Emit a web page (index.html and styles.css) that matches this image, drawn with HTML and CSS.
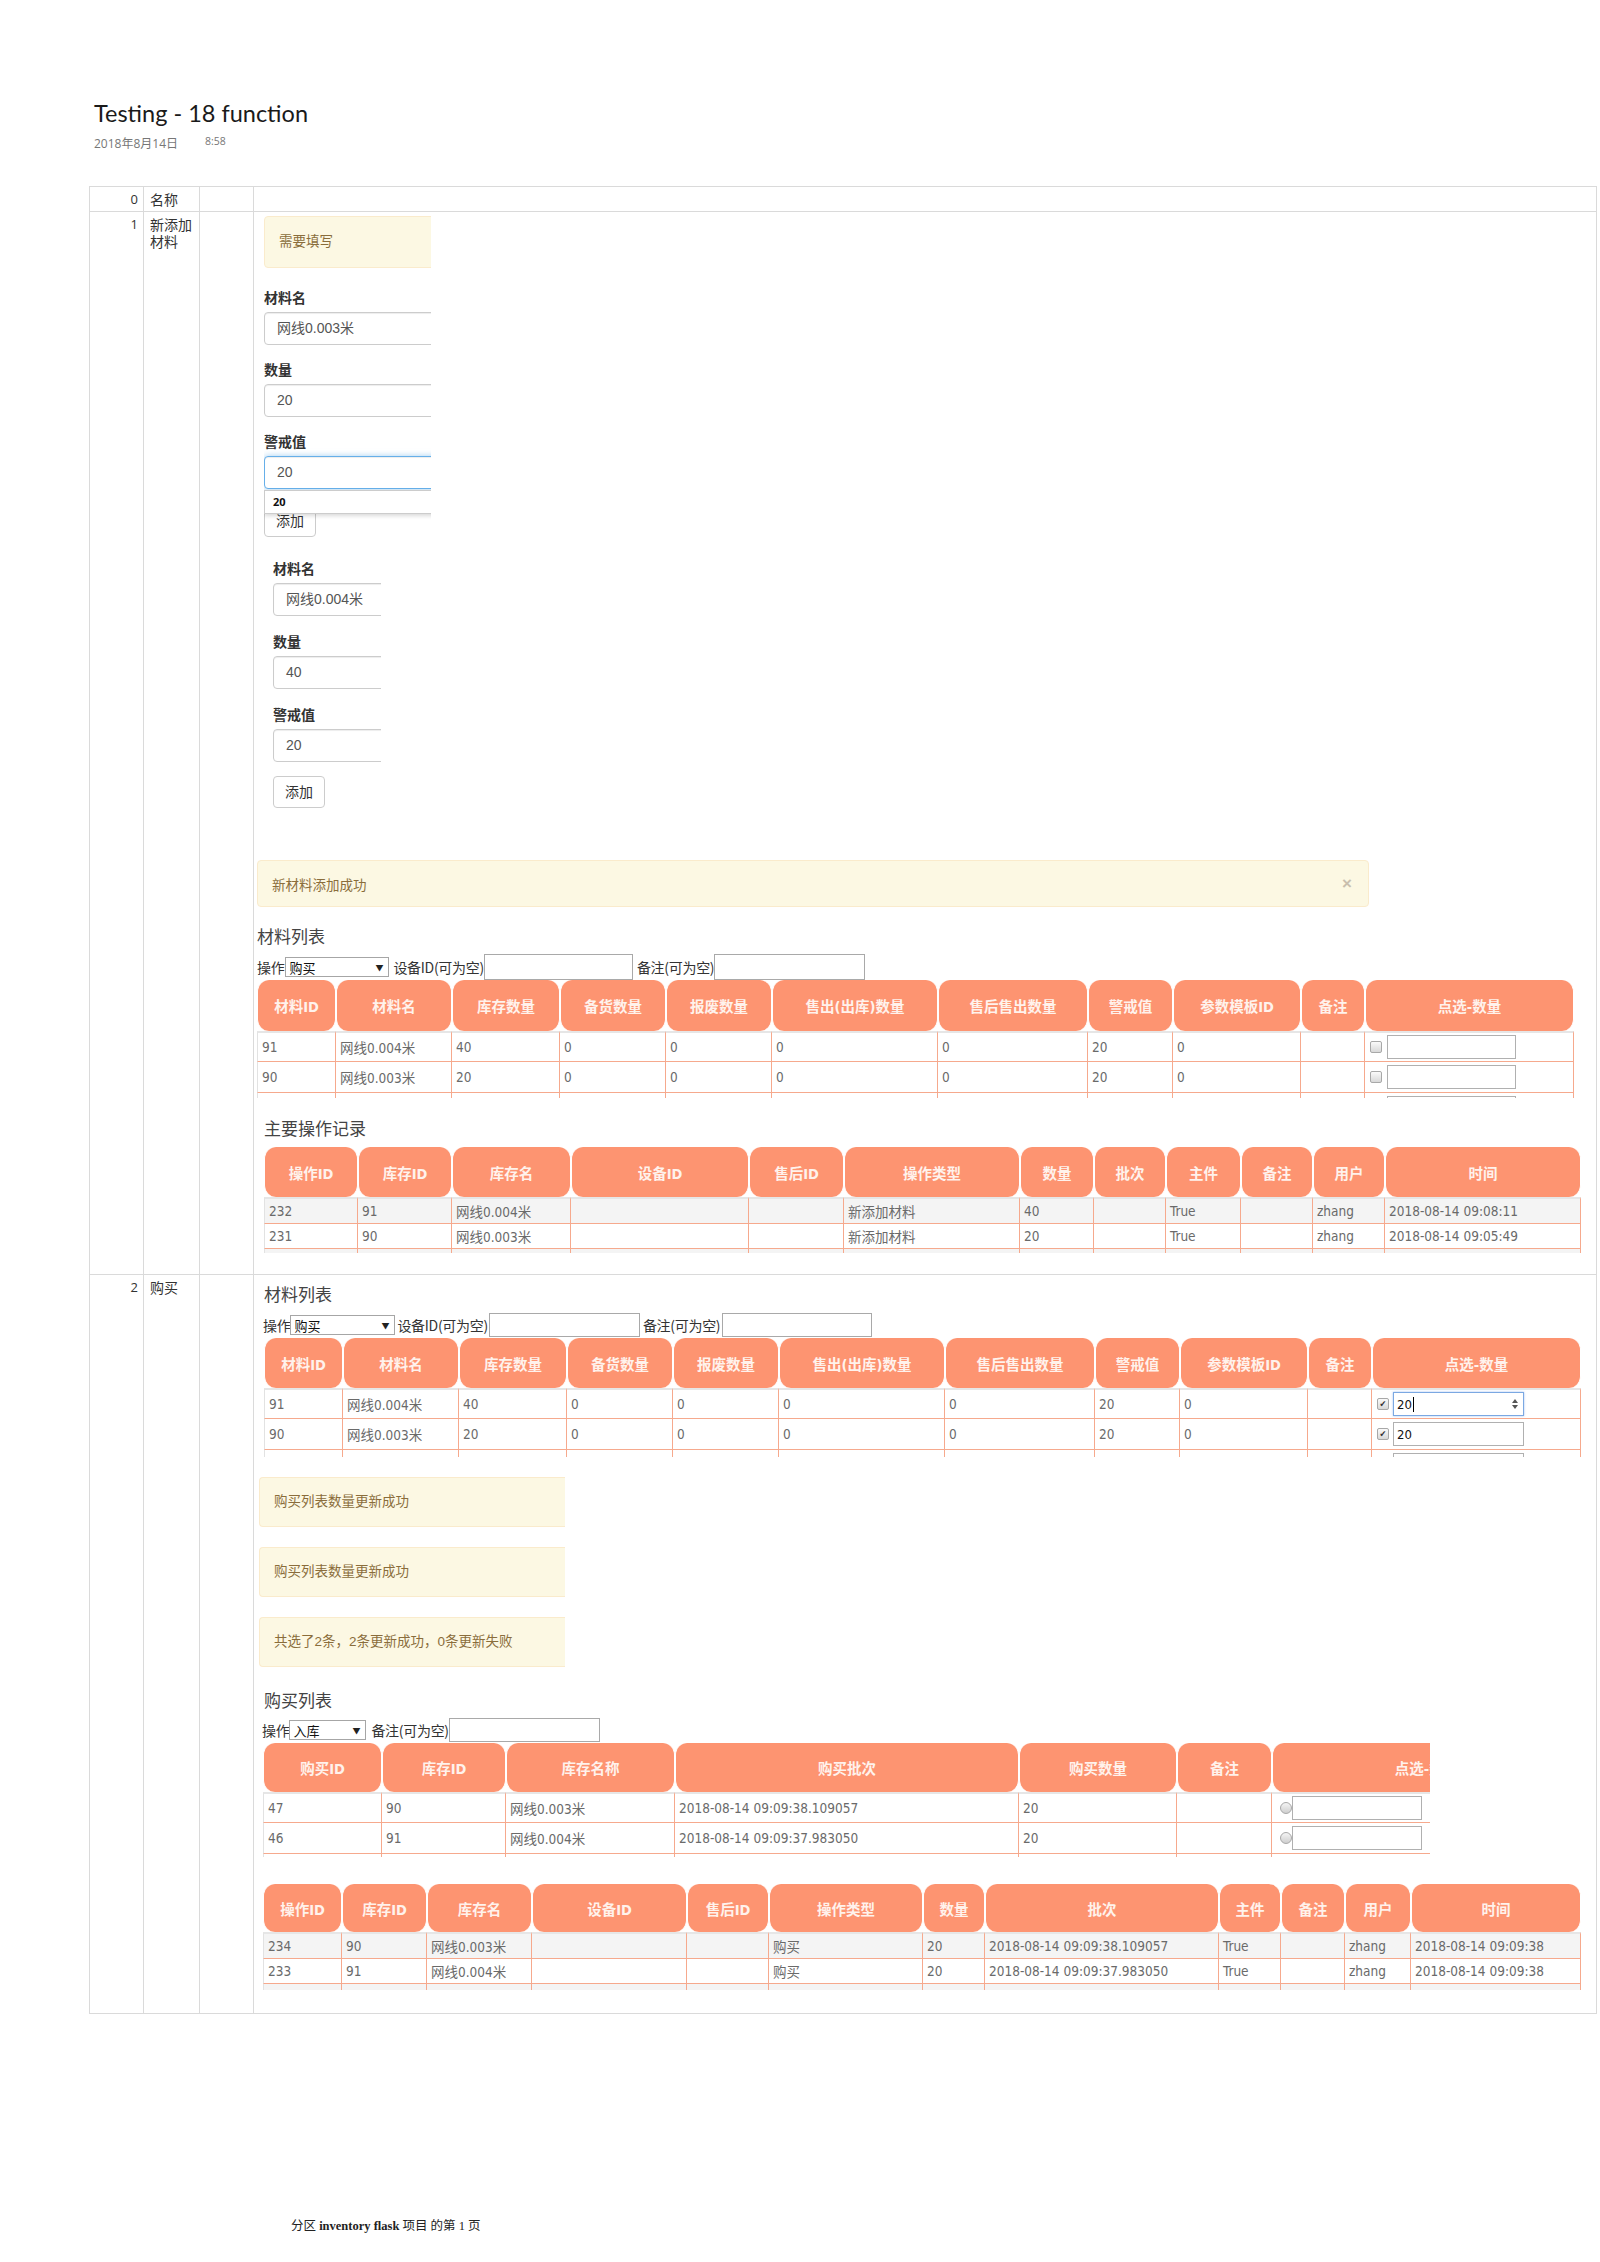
FILE: index.html
```html
<!DOCTYPE html>
<html lang="zh-CN">
<head>
<meta charset="utf-8">
<title>Testing - 18 function</title>
<link rel="stylesheet" href="styles.css">
</head>
<body>
<div class="page">
  <h1 class="title">Testing - 18 function</h1>
  <div class="meta"><span class="date">2018年8月14日</span><span class="time">8:58</span></div>

  <div class="outline">
    <div class="cell num">0</div>
    <div class="cell name">名称</div>
    <div class="cell blank"></div>
    <div class="cell content"></div>

    <div class="cell num">1</div>
    <div class="cell name">新添加材料</div>
    <div class="cell blank"></div>
    <div class="cell content">
      <div class="shot shot-a">
        <div class="alert alert-form">需要填写</div>
        <div class="fg fg-first"><label>材料名</label><div class="input">网线0.003米</div></div>
        <div class="fg"><label>数量</label><div class="input">20</div></div>
        <div class="fg"><label>警戒值</label><div class="input focus">20</div></div>
        <div class="btn btn-a">添加</div>
        <div class="autocomplete">20</div>
      </div>

      <div class="shot shot-b">
        <div class="fg fg-b1"><label>材料名</label><div class="input">网线0.004米</div></div>
        <div class="fg fg-b"><label>数量</label><div class="input">40</div></div>
        <div class="fg fg-b"><label>警戒值</label><div class="input">20</div></div>
        <div class="btn btn-b">添加</div>
      </div>

      <div class="alert alert-wide"><span>新材料添加成功</span><span class="close">×</span></div>

      <h3 class="heading h-s1">材料列表</h3>
      <div class="controls ctl-s1">
        <span>操作</span>
        <span class="select sel-s1"><span>购买</span><span class="arr">▼</span></span>
        <span class="lbl lbl-dev">设备ID(可为空)</span>
        <span class="tinput ti-dev"></span>
        <span class="lbl lbl-note">备注(可为空)</span>
        <span class="tinput ti-note"></span>
      </div>
      <div class="clip clip-mat1">
        <table class="grid t-mat">
          <colgroup><col class="m1"><col class="m2"><col class="m3"><col class="m4"><col class="m5"><col class="m6"><col class="m7"><col class="m8"><col class="m9"><col class="m10"><col class="m11"></colgroup>
          <thead><tr><th>材料ID</th><th>材料名</th><th>库存数量</th><th>备货数量</th><th>报废数量</th><th>售出(出库)数量</th><th>售后售出数量</th><th>警戒值</th><th>参数模板ID</th><th>备注</th><th>点选-数量</th></tr></thead>
          <tbody>
            <tr><td>91</td><td>网线0.004米</td><td>40</td><td>0</td><td>0</td><td>0</td><td>0</td><td>20</td><td>0</td><td></td><td class="pick"><span class="cb"></span><span class="numin"></span></td></tr>
            <tr><td>90</td><td>网线0.003米</td><td>20</td><td>0</td><td>0</td><td>0</td><td>0</td><td>20</td><td>0</td><td></td><td class="pick"><span class="cb"></span><span class="numin"></span></td></tr>
            <tr><td></td><td></td><td></td><td></td><td></td><td></td><td></td><td></td><td></td><td></td><td class="pick"><span class="cb"></span><span class="numin"></span></td></tr>
          </tbody>
        </table>
      </div>

      <h3 class="heading h-s1b">主要操作记录</h3>
      <div class="clip clip-op1">
        <table class="grid t-op1">
          <colgroup><col class="o1"><col class="o2"><col class="o3"><col class="o4"><col class="o5"><col class="o6"><col class="o7"><col class="o8"><col class="o9"><col class="o10"><col class="o11"><col class="o12"></colgroup>
          <thead><tr><th>操作ID</th><th>库存ID</th><th>库存名</th><th>设备ID</th><th>售后ID</th><th>操作类型</th><th>数量</th><th>批次</th><th>主件</th><th>备注</th><th>用户</th><th>时间</th></tr></thead>
          <tbody>
            <tr class="shade"><td>232</td><td>91</td><td>网线0.004米</td><td></td><td></td><td>新添加材料</td><td>40</td><td></td><td>True</td><td></td><td>zhang</td><td>2018-08-14 09:08:11</td></tr>
            <tr><td>231</td><td>90</td><td>网线0.003米</td><td></td><td></td><td>新添加材料</td><td>20</td><td></td><td>True</td><td></td><td>zhang</td><td>2018-08-14 09:05:49</td></tr>
            <tr class="shade"><td></td><td></td><td></td><td></td><td></td><td></td><td></td><td></td><td></td><td></td><td></td><td></td></tr>
          </tbody>
        </table>
      </div>
    </div>

    <div class="cell num">2</div>
    <div class="cell name">购买</div>
    <div class="cell blank"></div>
    <div class="cell content">
      <h3 class="heading h-s2">材料列表</h3>
      <div class="controls ctl-s2">
        <span>操作</span>
        <span class="select sel-s2"><span>购买</span><span class="arr">▼</span></span>
        <span class="lbl lbl-dev2">设备ID(可为空)</span>
        <span class="tinput ti-dev2"></span>
        <span class="lbl lbl-note2">备注(可为空)</span>
        <span class="tinput ti-note2"></span>
      </div>
      <div class="clip clip-mat2">
        <table class="grid t-mat t-mat2">
          <colgroup><col class="m1"><col class="m2"><col class="m3"><col class="m4"><col class="m5"><col class="m6"><col class="m7"><col class="m8"><col class="m9"><col class="m10"><col class="m11"></colgroup>
          <thead><tr><th>材料ID</th><th>材料名</th><th>库存数量</th><th>备货数量</th><th>报废数量</th><th>售出(出库)数量</th><th>售后售出数量</th><th>警戒值</th><th>参数模板ID</th><th>备注</th><th>点选-数量</th></tr></thead>
          <tbody>
            <tr><td>91</td><td>网线0.004米</td><td>40</td><td>0</td><td>0</td><td>0</td><td>0</td><td>20</td><td>0</td><td></td><td class="pick"><span class="cb on">✔</span><span class="numin focus">20<span class="caret"></span><svg class="spin" viewBox="0 0 8 14" width="8" height="14"><path d="M4 2 L7 6 L1 6 Z" fill="#555"/><path d="M1 8 L7 8 L4 12 Z" fill="#555"/></svg></span></td></tr>
            <tr><td>90</td><td>网线0.003米</td><td>20</td><td>0</td><td>0</td><td>0</td><td>0</td><td>20</td><td>0</td><td></td><td class="pick"><span class="cb on">✔</span><span class="numin">20</span></td></tr>
            <tr><td></td><td></td><td></td><td></td><td></td><td></td><td></td><td></td><td></td><td></td><td class="pick"><span class="cb"></span><span class="numin"></span></td></tr>
          </tbody>
        </table>
      </div>

      <div class="alert alert-small alert-first">购买列表数量更新成功</div>
      <div class="alert alert-small">购买列表数量更新成功</div>
      <div class="alert alert-small">共选了2条，2条更新成功，0条更新失败</div>

      <h3 class="heading h-s2b">购买列表</h3>
      <div class="controls ctl-s3">
        <span>操作</span>
        <span class="select sel-s3"><span>入库</span><span class="arr">▼</span></span>
        <span class="lbl lbl-note3">备注(可为空)</span>
        <span class="tinput ti-note3"></span>
      </div>
      <div class="clip clip-buy">
        <table class="grid t-buy">
          <colgroup><col class="b1"><col class="b2"><col class="b3"><col class="b4"><col class="b5"><col class="b6"><col class="b7"></colgroup>
          <thead><tr><th>购买ID</th><th>库存ID</th><th>库存名称</th><th>购买批次</th><th>购买数量</th><th>备注</th><th>点选-数量</th></tr></thead>
          <tbody>
            <tr><td>47</td><td>90</td><td>网线0.003米</td><td>2018-08-14 09:09:38.109057</td><td>20</td><td></td><td class="pick pick-r"><span class="radio"></span><span class="numin numin-b"></span></td></tr>
            <tr><td>46</td><td>91</td><td>网线0.004米</td><td>2018-08-14 09:09:37.983050</td><td>20</td><td></td><td class="pick pick-r"><span class="radio"></span><span class="numin numin-b"></span></td></tr>
            <tr><td></td><td></td><td></td><td></td><td></td><td></td><td class="pick pick-r"><span class="radio"></span><span class="numin numin-b"></span></td></tr>
          </tbody>
        </table>
      </div>

      <div class="clip clip-op2">
        <table class="grid t-op2">
          <colgroup><col class="p1"><col class="p2"><col class="p3"><col class="p4"><col class="p5"><col class="p6"><col class="p7"><col class="p8"><col class="p9"><col class="p10"><col class="p11"><col class="p12"></colgroup>
          <thead><tr><th>操作ID</th><th>库存ID</th><th>库存名</th><th>设备ID</th><th>售后ID</th><th>操作类型</th><th>数量</th><th>批次</th><th>主件</th><th>备注</th><th>用户</th><th>时间</th></tr></thead>
          <tbody>
            <tr class="shade"><td>234</td><td>90</td><td>网线0.003米</td><td></td><td></td><td>购买</td><td>20</td><td>2018-08-14 09:09:38.109057</td><td>True</td><td></td><td>zhang</td><td>2018-08-14 09:09:38</td></tr>
            <tr><td>233</td><td>91</td><td>网线0.004米</td><td></td><td></td><td>购买</td><td>20</td><td>2018-08-14 09:09:37.983050</td><td>True</td><td></td><td>zhang</td><td>2018-08-14 09:09:38</td></tr>
            <tr class="shade"><td></td><td></td><td></td><td></td><td></td><td></td><td></td><td></td><td></td><td></td><td></td><td></td></tr>
          </tbody>
        </table>
      </div>
    </div>
  </div>

  <div class="footer">分区 <b>inventory flask</b> 项目 的第 1 页</div>
</div>
</body>
</html>
```

FILE: styles.css
```css
* { box-sizing: border-box; }
html, body { margin: 0; padding: 0; background: #fff; }
body { font-family: "Liberation Sans", "Noto Sans CJK SC", sans-serif; color: #333; }
.page { width: 1600px; min-height: 2262px; overflow: hidden; }

.title { margin: 0; padding: 100px 0 0 94px; font-family: Lato, "Open Sans", sans-serif; font-weight: 400; font-size: 23.5px; line-height: 26px; color: #1a1a1a; }
.meta { margin: 11px 0 0 94px; height: 14px; display: flex; align-items: flex-start; font-family: "Open Sans", "Noto Sans CJK SC", sans-serif; font-size: 12px; line-height: 14px; color: #777; }
.meta .date { width: 111px; }
.meta .time { margin-top: -3px; font-size: 10.5px; }

.outline { margin: 35px 0 0 89px; width: 1508px; display: grid; grid-template-columns: 54px 56px 54px 1343px; grid-template-rows: 25px 1063px 739px; border-top: 1px solid #dadada; border-left: 1px solid #dadada; }
.cell { border-right: 1px solid #dadada; border-bottom: 1px solid #dadada; }
.num { text-align: right; padding: 4px 5px 0 0; font-family: "Open Sans", sans-serif; font-size: 13px; line-height: 17px; color: #333; }
.name { padding: 4px 2px 0 6px; font-family: "Noto Sans CJK SC", sans-serif; font-size: 14px; line-height: 17px; color: #333; }
.content { display: flex; flex-direction: column; align-items: flex-start; }

/* screenshot forms */
.shot { position: relative; overflow: hidden; flex: none; }
.shot-a { margin: 4px 0 0 10px; width: 167px; }
.shot-b { margin: 22px 0 0 19px; width: 108px; }
.alert { background: #fcf8e3; border: 1px solid #faebcc; color: #8a6d3b; border-radius: 4px; font-family: "Liberation Sans", "Noto Sans CJK SC", sans-serif; font-size: 13.5px; flex: none; }
.alert-form { width: 300px; height: 52px; line-height: 50px; padding-left: 14px; }
.fg { margin-top: 15px; }
.fg-first { margin-top: 20px; }
.fg-b1 { margin-top: 0; }
.fg-b { margin-top: 16px; }
.fg label { display: block; height: 20px; line-height: 20px; font-weight: bold; font-size: 14px; color: #333; }
.input { margin-top: 4px; width: 300px; height: 33px; line-height: 31px; border: 1px solid #ccc; border-radius: 4px; padding-left: 12px; font-size: 14px; color: #555; box-shadow: inset 0 1px 1px rgba(0,0,0,.075); background: #fff; }
.input.focus { border-color: #66afe9; box-shadow: inset 0 1px 1px rgba(0,0,0,.075), 0 0 6px rgba(102,175,233,.6); }
.btn { width: 52px; height: 32px; line-height: 30px; border: 1px solid #ccc; border-radius: 4px; text-align: center; font-size: 14px; color: #333; background: #fff; }
.btn-a { margin-top: 16px; }
.btn-b { margin-top: 14px; }
.autocomplete { position: absolute; left: 0; top: 274px; width: 300px; height: 24px; background: #fff; border: 1px solid #ccc; box-shadow: 0 2px 4px rgba(0,0,0,.15); font-family: "Open Sans", sans-serif; font-weight: bold; font-size: 11px; line-height: 22px; padding-left: 8px; color: #111; }

.alert-wide { margin: 52px 0 0 3px; width: 1112px; height: 47px; display: flex; align-items: center; justify-content: space-between; padding: 0 16px 0 14px; }
.alert-wide .close { font-size: 17px; font-weight: bold; color: #c9bfae; }

.alert-small { margin: 20px 0 0 5px; width: 306px; height: 50px; line-height: 48px; padding-left: 14px; border-right: none; border-radius: 4px 0 0 4px; }

.heading { margin: 0; font-family: "Noto Sans CJK SC", sans-serif; font-weight: 400; font-size: 17px; line-height: 24px; color: #444; flex: none; }
.h-s1 { margin: 17px 0 0 3px; }
.h-s1b { margin: 18px 0 0 10px; }
.h-s2 { margin: 7px 0 0 10px; }
.h-s2b { margin: 21px 0 0 10px; }

.controls { display: flex; align-items: center; font-size: 14px; color: #333; flex: none; font-family: "Noto Sans CJK SC", sans-serif; letter-spacing: -0.3px; }
.ctl-s1 { margin: 6px 0 0 3px; height: 26px; }
.ctl-s2 { margin: 7px 0 0 9px; height: 24px; }
.ctl-s3 { margin: 6px 0 0 8px; height: 24px; }
.select { display: inline-flex; align-items: center; justify-content: space-between; height: 20px; border: 1px solid #a6a6a6; padding: 0 5px 0 3px; font-size: 13px; color: #111; background: #fff; letter-spacing: 0; }
.select .arr { font-size: 8px; color: #222; }
.sel-s1 { margin-left: 1px; width: 104px; }
.sel-s2 { margin-left: 0; width: 105px; }
.sel-s3 { margin-left: 0; width: 77px; }
.tinput { display: inline-block; height: 26px; border: 1px solid #a9a9a9; background: #fff; }
.ctl-s2 .tinput, .ctl-s3 .tinput { height: 24px; }
.lbl-dev { margin-left: 4px; }
.ti-dev { width: 149px; margin-left: 0; }
.lbl-note { margin-left: 4px; }
.ti-note { width: 151px; }
.lbl-dev2 { margin-left: 2px; }
.ti-dev2 { width: 151px; margin-left: 1px; }
.lbl-note2 { margin-left: 3px; }
.ti-note2 { width: 150px; margin-left: 2px; }
.lbl-note3 { margin-left: 5px; }
.ti-note3 { width: 151px; }

/* tables */
.clip { overflow: hidden; flex: none; }
.clip-mat1 { margin: 0 0 0 3px; width: 1317px; height: 118px; }
.clip-op1 { margin: 7px 0 0 10px; width: 1317px; height: 106px; }
.clip-mat2 { margin: 1px 0 0 10px; width: 1317px; height: 119px; }
.clip-buy { margin: 1px 0 0 9px; width: 1167px; height: 114px; }
.clip-op2 { margin: 27px 0 0 9px; width: 1318px; height: 106px; }

.grid { border-collapse: separate; border-spacing: 0; table-layout: fixed; }
.t-mat, .t-op1 { width: 1317px; }
.t-buy { width: 1318px; }
.t-op2 { width: 1318px; }
.grid th { background: #fd9471; color: #fff2ec; font-family: "Liberation Sans Narrow", "DejaVu Sans Condensed", "Noto Sans CJK SC", sans-serif; font-stretch: condensed; font-weight: bold; font-size: 14.5px; text-align: center; padding: 0; border-radius: 12px; border-left: 1px solid #fff; border-right: 1px solid #fff; white-space: nowrap; overflow: hidden; }
.grid td { border-right: 1px solid #f6a98d; border-bottom: 1px solid #f6a98d; padding: 0 0 0 4px; color: #6a6a6a; font-family: "Liberation Sans Narrow", "DejaVu Sans Condensed", "Noto Sans CJK SC", sans-serif; font-stretch: condensed; font-size: 13.5px; white-space: nowrap; overflow: hidden; }
.grid td:first-child { border-left: 1px solid #e2e2e2; }
.grid tbody tr:first-child td { border-top: 2px solid #e6e6e6; }
.grid tr.shade td { background: #f4f4f4; }

.t-mat thead tr { height: 51px; }
.t-mat tbody tr { height: 31px; }
.t-mat2 thead tr { height: 50px; }
.t-op1 thead tr { height: 50px; }
.t-op1 tbody tr, .t-op2 tbody tr { height: 25px; }
.t-op1 tbody tr:first-child, .t-op2 tbody tr:first-child { height: 27px; }
.t-buy thead tr { height: 49px; }
.t-buy tbody tr { height: 31px; }
.t-op2 thead tr { height: 48px; }

.m1 { width: 79px; } .m2 { width: 116px; } .m3 { width: 108px; } .m4 { width: 106px; } .m5 { width: 106px; } .m6 { width: 166px; } .m7 { width: 150px; } .m8 { width: 85px; } .m9 { width: 128px; } .m10 { width: 64px; } .m11 { width: 209px; }
.o1 { width: 94px; } .o2 { width: 94px; } .o3 { width: 119px; } .o4 { width: 178px; } .o5 { width: 95px; } .o6 { width: 176px; } .o7 { width: 74px; } .o8 { width: 72px; } .o9 { width: 75px; } .o10 { width: 72px; } .o11 { width: 72px; } .o12 { width: 196px; }
.b1 { width: 119px; } .b2 { width: 124px; } .b3 { width: 169px; } .b4 { width: 344px; } .b5 { width: 158px; } .b6 { width: 95px; } .b7 { width: 309px; }
.p1 { width: 79px; } .p2 { width: 85px; } .p3 { width: 105px; } .p4 { width: 155px; } .p5 { width: 82px; } .p6 { width: 154px; } .p7 { width: 62px; } .p8 { width: 234px; } .p9 { width: 62px; } .p10 { width: 64px; } .p11 { width: 66px; } .p12 { width: 170px; }

.pick { padding-left: 5px !important; }
.pick-r { padding-left: 8px !important; }
.cb { display: inline-block; width: 12px; height: 12px; border: 1px solid #a8a8a8; border-radius: 2px; background: linear-gradient(#fafafa, #d8d8d8); vertical-align: middle; font-size: 9px; line-height: 10px; text-align: center; color: #333; }
.radio { display: inline-block; width: 12px; height: 12px; border: 1px solid #a8a8a8; border-radius: 50%; background: linear-gradient(#f4f4f4, #cfcfcf); vertical-align: middle; }
.numin { display: inline-flex; align-items: center; vertical-align: middle; margin-left: 5px; width: 129px; height: 24px; border: 1px solid #b0b0b0; background: #fff; padding-left: 3px; color: #111; font-size: 13px; }
.t-mat2 .numin { margin-left: 4px; width: 131px; }
.numin.focus { border-color: #7ba8e2; box-shadow: 0 0 2px rgba(102,150,233,.6); }
.caret { display: inline-block; width: 1px; height: 15px; background: #000; margin-left: 1px; }
.spin { margin-left: auto; margin-right: 4px; }
.numin-b { margin-left: 0; width: 130px; }

.footer { margin: 204px 0 0 291px; font-family: "Liberation Serif", "Noto Sans CJK SC", serif; font-size: 12.5px; line-height: 16px; color: #222; }
```
